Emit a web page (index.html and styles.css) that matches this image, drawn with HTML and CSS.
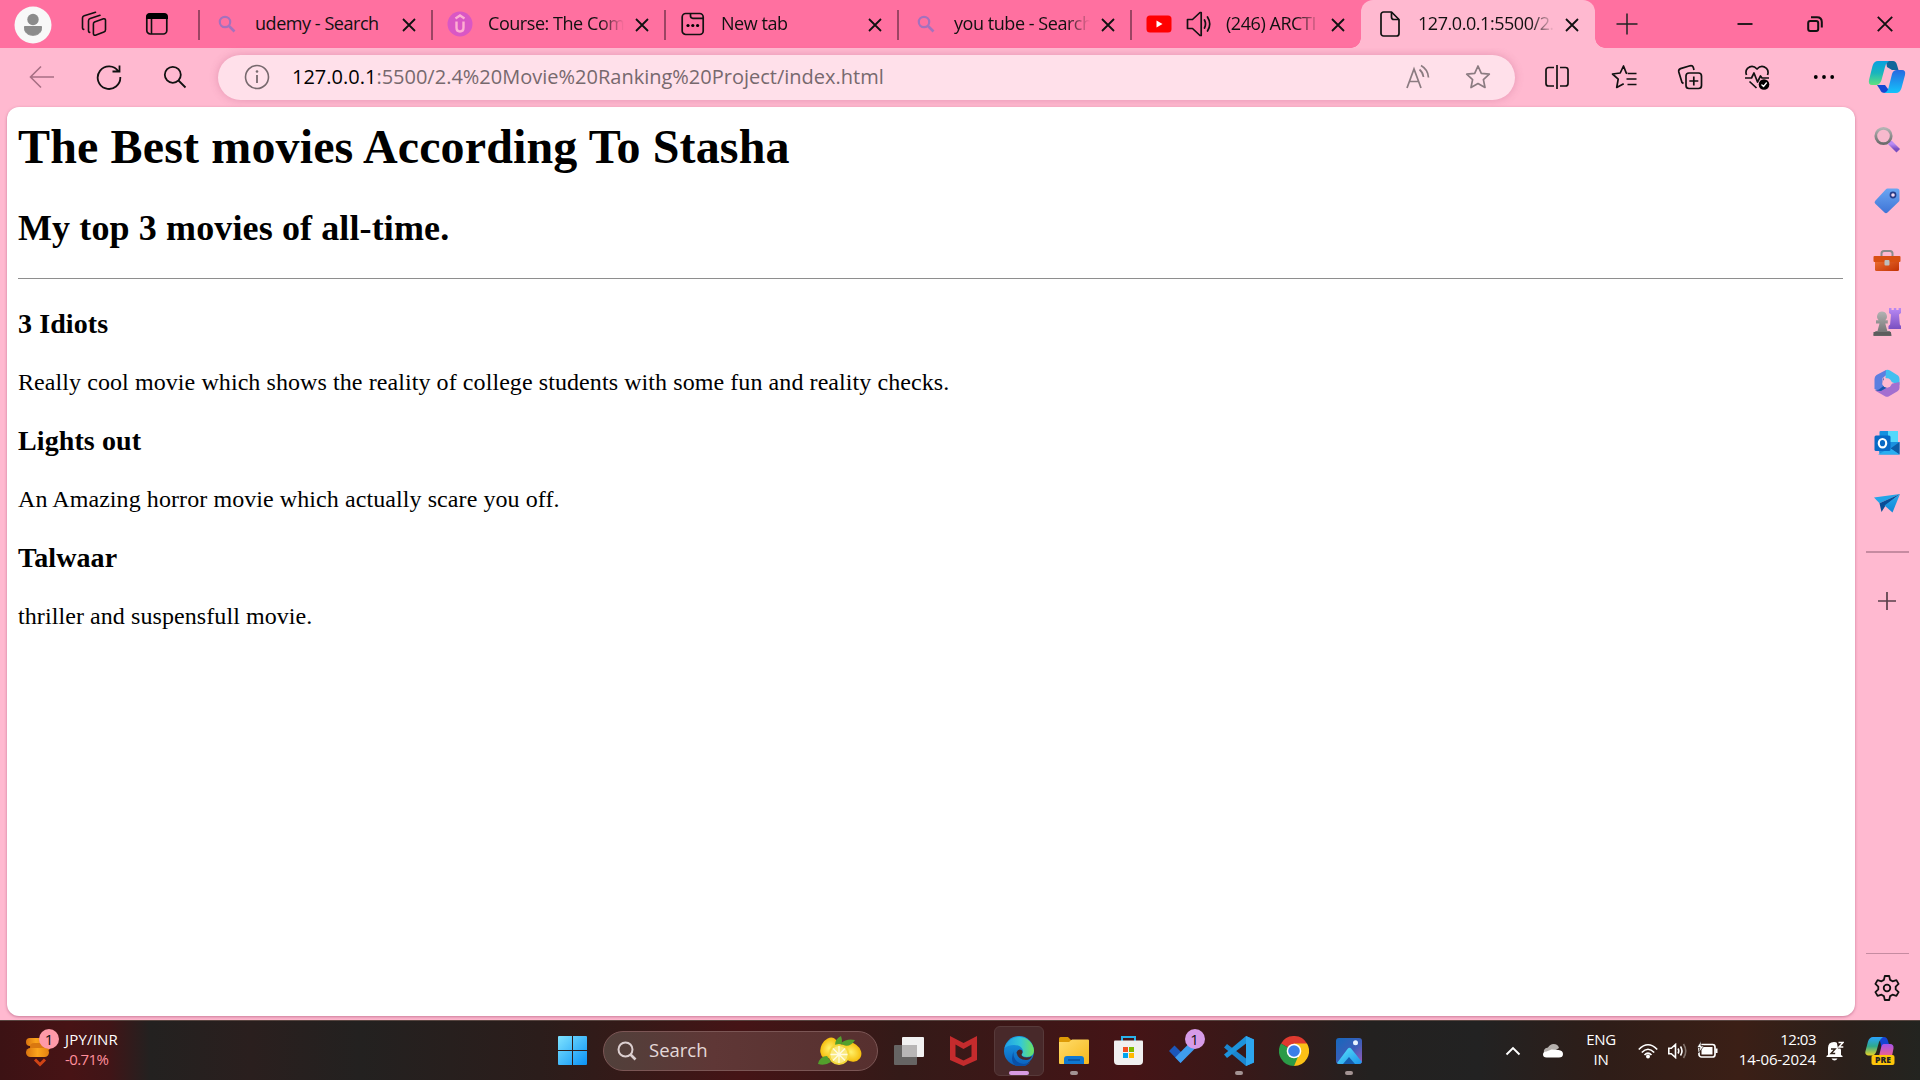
FILE: index.html
```html
<!DOCTYPE html>
<html lang="en">
<head>
<meta charset="utf-8">
<title>Movie Ranking</title>
<link rel="stylesheet" href="styles.css">
</head>
<body>
<svg width="0" height="0" class="defs">
  <defs>
    <linearGradient id="winBlue" x1="0" y1="0" x2="1" y2="1"><stop offset="0" stop-color="#7fe3ff"/><stop offset="1" stop-color="#0a92f5"/></linearGradient>
    <linearGradient id="cpTop" x1="0" y1="0" x2="0" y2="1"><stop offset="0" stop-color="#0aa0e0"/><stop offset=".5" stop-color="#19b5bd"/><stop offset="1" stop-color="#5fe27f"/></linearGradient>
    <linearGradient id="cpBot" x1="0" y1="0" x2="0" y2="1"><stop offset="0" stop-color="#2668e0"/><stop offset="1" stop-color="#14c4fb"/></linearGradient>
    <linearGradient id="tagBlue" x1="0" y1="0" x2="0" y2="1"><stop offset="0" stop-color="#6aa6f2"/><stop offset="1" stop-color="#3f74d6"/></linearGradient>
    <linearGradient id="purple" x1="0" y1="0" x2="0" y2="1"><stop offset="0" stop-color="#b98af5"/><stop offset="1" stop-color="#7a4fc0"/></linearGradient>
    <linearGradient id="grey" x1="0" y1="0" x2="0" y2="1"><stop offset="0" stop-color="#b3b3b3"/><stop offset="1" stop-color="#6b6b6b"/></linearGradient>
    <linearGradient id="box" x1="0" y1="0" x2="1" y2="1"><stop offset="0" stop-color="#ef7336"/><stop offset="1" stop-color="#c23203"/></linearGradient>
    <linearGradient id="plane" x1="0" y1="0" x2="0" y2="1"><stop offset="0" stop-color="#2aa9ea"/><stop offset="1" stop-color="#0d86d8"/></linearGradient>
    <linearGradient id="edgeA" x1="0" y1="0" x2="1" y2="0"><stop offset="0" stop-color="#1f9fe8"/><stop offset=".55" stop-color="#35c9d6"/><stop offset="1" stop-color="#6fe35c"/></linearGradient>
    <linearGradient id="edgeB" x1="0" y1="0" x2="0" y2="1"><stop offset="0" stop-color="#1a9fe6"/><stop offset="1" stop-color="#0b60bd"/></linearGradient>
    <linearGradient id="folder" x1="0" y1="0" x2="1" y2="1"><stop offset="0" stop-color="#ffdc6b"/><stop offset="1" stop-color="#f6b81c"/></linearGradient>
    <linearGradient id="photo" x1="0" y1="0" x2="1" y2="1"><stop offset="0" stop-color="#1668bd"/><stop offset=".55" stop-color="#3c5db8"/><stop offset="1" stop-color="#9b5bb8"/></linearGradient>
    <linearGradient id="hill" x1="0" y1="0" x2="1" y2="1"><stop offset="0" stop-color="#5be4fb"/><stop offset="1" stop-color="#1b93ea"/></linearGradient>
    <linearGradient id="coin" x1="0" y1="0" x2="1" y2="0"><stop offset="0" stop-color="#d9740f"/><stop offset=".5" stop-color="#fba51c"/><stop offset="1" stop-color="#e38110"/></linearGradient>
    <radialGradient id="lemon"><stop offset="0" stop-color="#fff16a"/><stop offset="1" stop-color="#f5bd0c"/></radialGradient>
    <linearGradient id="preA" x1="0" y1="0" x2="0" y2="1"><stop offset="0" stop-color="#2aa4ff"/><stop offset=".5" stop-color="#2ea98c"/><stop offset="1" stop-color="#e8d326"/></linearGradient>
    <linearGradient id="preB" x1="0" y1="0" x2="0" y2="1"><stop offset="0" stop-color="#a553ea"/><stop offset="1" stop-color="#f0608c"/></linearGradient>
    <symbol id="x" viewBox="0 0 16 16"><path d="M2 2l12 12M14 2L2 14" stroke="#111" stroke-width="1.8" fill="none"/></symbol>
    <symbol id="mag" viewBox="0 0 18 18"><circle cx="7" cy="7" r="5.2" stroke="#a571bd" stroke-width="2.2" fill="none"/><path d="M11 11l5.5 5.5" stroke="#a571bd" stroke-width="2.6"/></symbol>
  </defs>
</svg>

<header class="tabstrip">
  <svg class="avatar" width="38" height="38" viewBox="0 0 38 38"><circle cx="19" cy="19" r="18.5" fill="#f8f8f8"/><circle cx="19" cy="13.5" r="5.7" fill="#8b8b8b"/><path d="M10.500 20.500h17v1.800c0 4-3.400 7-8.500 7s-8.500-3-8.500-7z" fill="#8b8b8b" stroke="#8b8b8b" stroke-linejoin="round"/></svg>
  <svg class="spaces" width="26" height="26" viewBox="0 0 26 26" fill="none" stroke="#111" stroke-width="1.600" stroke-linejoin="round" stroke-linecap="round"><path d="M13.500 11l9-3.200a1.500 1.500 0 0 1 2 1.400v9.600a2.500 2.500 0 0 1-1.600 2.300l-8.500 3.100a1.500 1.500 0 0 1-2-1.400V13.200a2.300 2.300 0 0 1 1.100-2.200"/><path d="M19 4.300l-9.800 3.200A2.500 2.500 0 0 0 7.500 9.700v10.400q.2 1.200 1.200 1.300"/><path d="M14.500 1.300L3.200 4.700A2.500 2.500 0 0 0 1.500 6.900v10.200q.2 1.200 1.200 1.300"/></svg>
  <svg class="tabact" width="24" height="24" viewBox="0 0 24 24"><rect x="1.800" y="2" width="20" height="20" rx="3.500" fill="none" stroke="#111" stroke-width="1.700"/><path d="M1 7V5a4 4 0 0 1 4-4h14a4 4 0 0 1 4 4v2z" fill="#000"/><path d="M6.500 7v15" stroke="#111" stroke-width="1.600"/></svg>
  <div class="tab first"><span class="fav"><svg width="18" height="18"><use href="#mag"/></svg></span><span class="label">udemy - Search</span><svg class="close" width="16" height="16"><use href="#x"/></svg></div>
  <div class="tab"><span class="fav"><svg width="26" height="26" viewBox="0 0 26 26"><circle cx="13" cy="13" r="12.500" fill="#d957c5"/><path d="M8.500 7.500L13 4.500l4.500 3M9.500 10.500v6q0 4 3.500 4t3.500-4v-6" fill="none" stroke="#ffaed2" stroke-width="2.400"/></svg></span><span class="label">Course: The Com</span><svg class="close" width="16" height="16"><use href="#x"/></svg></div>
  <div class="tab"><span class="fav"><svg width="24" height="24" viewBox="0 0 24 24"><rect x="1.200" y="1.500" width="21" height="21" rx="3.500" fill="none" stroke="#111" stroke-width="1.700"/><path d="M9.500 1.500V4q0 2.300 2.300 2.300h10.500" fill="none" stroke="#111" stroke-width="1.700"/><circle cx="7" cy="13.500" r="1.600"/><circle cx="11.800" cy="13.500" r="1.600"/><circle cx="16.600" cy="13.500" r="1.600"/></svg></span><span class="label">New tab</span><svg class="close" width="16" height="16"><use href="#x"/></svg></div>
  <div class="tab"><span class="fav"><svg width="18" height="18"><use href="#mag"/></svg></span><span class="label">you tube - Search</span><svg class="close" width="16" height="16"><use href="#x"/></svg></div>
  <div class="tab media"><span class="fav"><svg width="26" height="18" viewBox="0 0 26 18"><rect x=".5" y=".5" width="25" height="17" rx="3.500" fill="#f00"/><path d="M10.500 5.500v7l6-3.500z" fill="#fff"/></svg></span><svg class="sound" width="26" height="26" viewBox="0 0 26 26" fill="none" stroke="#111" stroke-width="1.700" stroke-linejoin="round" stroke-linecap="round"><path d="M1.500 8.500h5L14 1.500h1.200v23H14L6.500 17.500h-5z"/><path d="M18.500 9q2 4 0 8M21.500 6q4.500 7 0 14"/></svg><span class="label">(246) ARCTI</span><svg class="close" width="16" height="16"><use href="#x"/></svg></div>
  <div class="tab active"><span class="fav"><svg width="20" height="26" viewBox="0 0 20 26" fill="none" stroke="#111" stroke-width="1.700" stroke-linejoin="round"><path d="M11.500 1H3.500A2.500 2.500 0 0 0 1 3.500v19A2.500 2.500 0 0 0 3.500 25h13a2.500 2.500 0 0 0 2.500-2.500V8.500z"/><path d="M11.500 1v5q0 2.500 2.500 2.500h5"/></svg></span><span class="label">127.0.0.1:5500/2.</span><svg class="close" width="16" height="16"><use href="#x"/></svg></div>
  <svg class="newtab" width="22" height="22" viewBox="0 0 22 22"><path d="M11 .5v21M.5 11h21" stroke="#222" stroke-width="1.500"/></svg>
  <div class="winctl">
    <svg width="16" height="16" viewBox="0 0 16 16"><path d="M.5 8h15" stroke="#111" stroke-width="1.800"/></svg>
    <svg width="16" height="16" viewBox="0 0 16 16" fill="none" stroke="#111" stroke-width="2"><rect x="1.200" y="5" width="10" height="10" rx="2"/><path d="M4 1.200h6q4.800 0 4.800 4.800v5.500"/></svg>
    <svg width="16" height="16" viewBox="0 0 16 16"><path d="M.8.800l14.400 14.400M15.200.8L.8 15.200" stroke="#111" stroke-width="1.900"/></svg>
  </div>
</header>

<nav class="toolbar">
  <div class="navbtns">
    <svg width="26" height="24" viewBox="0 0 26 24"><path d="M25 12H1.500M12 1.500L1.500 12 12 22.500" fill="none" stroke="#a86f84" stroke-width="1.600"/></svg>
    <svg width="26" height="26" viewBox="0 0 26 26" fill="none" stroke="#111" stroke-width="1.800"><path d="M22.500 7.500A11.300 11.300 0 1 0 24.300 13M23.500 1.500v6h-7"/></svg>
    <svg width="24" height="24" viewBox="0 0 24 24" fill="none" stroke="#111" stroke-width="1.800"><circle cx="9.800" cy="9.800" r="8"/><path d="M15.500 15.500l7 7"/></svg>
  </div>
  <div class="address">
    <svg width="26" height="26" viewBox="0 0 26 26"><circle cx="13" cy="13" r="11.500" fill="none" stroke="#77696e" stroke-width="1.600"/><path d="M13 11v8" stroke="#77696e" stroke-width="1.800"/><circle cx="13" cy="7.500" r="1.300" fill="#77696e"/></svg>
    <span class="url"><b>127.0.0.1</b>:5500/2.4%20Movie%20Ranking%20Project/index.html</span>
    <svg width="26" height="26" viewBox="0 0 26 26" fill="none" stroke="#8b7b81" stroke-width="1.700"><path d="M2 24L9 5l7 19M4.500 17.500h9M14.500 5.500q3.500 3 4 7.500M16 1.500q7 4 7.500 12"/></svg>
    <svg width="26" height="26" viewBox="0 0 26 26"><path d="M13 2l3.300 7.300 8 .9-5.900 5.400 1.600 7.900-7-4-7 4 1.600-7.900L1.700 10.200l8-.9z" fill="none" stroke="#8b7b81" stroke-width="1.700" stroke-linejoin="round"/></svg>
  </div>
  <div class="tools">
    <svg width="26" height="26" viewBox="0 0 26 26" fill="none" stroke="#111" stroke-width="1.700"><path d="M10 3.500H4.500A2.500 2.500 0 0 0 2 6v13.500A2.500 2.500 0 0 0 4.500 22H10M16 3.500h5.500A2.500 2.500 0 0 1 24 6v13.500a2.500 2.500 0 0 1-2.500 2.500H16M13 1v24"/></svg>
    <svg width="26" height="26" viewBox="0 0 26 26" fill="none" stroke="#111" stroke-width="1.700" stroke-linejoin="round"><path d="M16.500 9.300l-1.200-.2L12.500 2l-3.300 7-7.700 1 5.700 5.200-1.500 8.300 7-3.800M17 9.500h8.500M15.500 15h10M16.500 20.500h9"/></svg>
    <svg width="26" height="26" viewBox="0 0 26 26" fill="none" stroke="#111" stroke-width="1.700"><rect x="9" y="9" width="15.500" height="15.500" rx="3"/><path d="M16.800 12.500v9M12.300 17h9M6.500 19.500L5 18.500 1.800 8q-.6-2.500 1.700-3.400l9.500-2.800q2.500-.6 3.300 1.600l.7 2.600"/></svg>
    <svg width="26" height="26" viewBox="0 0 26 26" fill="none" stroke="#111" stroke-width="1.700" stroke-linejoin="round"><path d="M2.500 11Q1 7 3.500 4.300 8.500 0 13 5q4.500-5 9.500-.7Q25 7 23.500 11M1 14h6.500l2.500-5 3.500 9 3-6 1.500 2H25M5.500 17.500l7 6.500"/><circle cx="20" cy="20.500" r="5.300" fill="#000" stroke="none"/><path d="M17.500 20.500l2 2 3.200-4" stroke="#fff" stroke-width="1.300"/></svg>
    <svg width="26" height="26" viewBox="0 0 26 26"><circle cx="4.800" cy="13" r="1.900"/><circle cx="13" cy="13" r="1.900"/><circle cx="21.200" cy="13" r="1.900"/></svg>
  </div>
  <svg class="copilot" width="38" height="34" viewBox="0 0 38 34"><path d="M18 1h7q3 0 4 4l1.500 5H24l-5-3z" fill="#11659a"/><path d="M10 1h11q-3 2-4 6l-3.500 13q-1.500 5-5.500 5H4q-4 0-3-5L4.500 6Q6 1 10 1z" fill="url(#cpTop)"/><path d="M9 25h8l6 8h-6q-4 0-5-3.500z" fill="#1746d2"/><path d="M28 33H16q3.500-1 4.500-5L24 14q1.200-4 5-4h5q4 0 3 5l-3.500 13q-1.500 5-5.500 5z" fill="url(#cpBot)"/></svg>
</nav>

<div class="middle">
  <main class="page">
    <h1>The Best movies According To Stasha</h1>
    <h2>My top 3 movies of all-time.</h2>
    <hr>
    <h3>3 Idiots</h3>
    <p>Really cool movie which shows the reality of college students with some fun and reality checks.</p>
    <h3>Lights out</h3>
    <p>An Amazing horror movie which actually scare you off.</p>
    <h3>Talwaar</h3>
    <p>thriller and suspensfull movie.</p>
  </main>
  <aside class="sidebar">
    <svg width="28" height="28" viewBox="0 0 28 28"><circle cx="10.500" cy="10" r="7.700" fill="#f7b9cd" stroke="url(#grey)" stroke-width="2.800"/><path d="M16 15.500l3.500 3.500" stroke="#6b6b6b" stroke-width="2.600"/><path d="M18.500 18l5 5" stroke="url(#purple)" stroke-width="5" stroke-linecap="square"/></svg>
    <svg width="28" height="28" viewBox="0 0 28 28"><path d="M14.500 1.500h9.500q2.500 0 2.500 2.500v9q0 1-.8 1.800L14.500 25.500q-1.500 1.500-3 0L2.300 16.800q-1.500-1.500 0-3L12.700 2.500q.8-1 1.800-1z" fill="url(#tagBlue)"/><circle cx="20" cy="8" r="2.600" fill="#f4d8f0" stroke="#263c88" stroke-width="1.600"/></svg>
    <svg width="28" height="28" viewBox="0 0 28 28"><path d="M8.500 9V6.500Q8.500 4 11 4h6q2.500 0 2.500 2.500V9" fill="none" stroke="#8b8b8b" stroke-width="2"/><rect x="2" y="12" width="24" height="12" rx="1.500" fill="url(#box)"/><rect x=".5" y="9" width="27" height="6" rx="1" fill="#d94f12"/><rect x="11.500" y="13" width="5" height="5.500" rx="1" fill="#bdbdbd"/></svg>
    <svg width="28" height="28" viewBox="0 0 28 28"><path d="M16 0h2.500v2h2.300V0h2.500v2h2.300V0H28v5l-2 1.500.8 10L28 18v3H15.500v-3l1.600-1.500.9-10L16 5z" fill="url(#purple)"/><path d="M9 3.500a5 5 0 0 1 3.300 8.700h2.500v3.300h-2.500l2 7.500h2.200q2 1 2 5H.5q0-4 2.500-5h1.500l2-7.500H3v-3.300h2.700A5 5 0 0 1 9 3.500z" fill="url(#grey)"/><path d="M.5 24h17.500v3.500H.5z" fill="#5d5d5d"/></svg>
    <svg width="28" height="28" viewBox="0 0 28 28"><path d="M13 1L3.500 6Q1.500 7.500 1.500 10v10l6 3 6-4-4-3.500V9L16 4z" fill="#5c7fe0"/><path d="M13 1q2-.8 4 .5l8 5q1.500 1 1.500 3.500v6l-8-3-6-4z" fill="#42bff0"/><path d="M11 2.500v9l-2 3.500 2-7z" fill="#164d9c"/><path d="M26.500 13v6q0 2-2 3.300l-8.500 5q-2 1-4 0L2 21.500h6l11.500-7z" fill="#a36fd0"/><path d="M2 21.500l6 .5 6-3.500-3-2-5 4z" fill="#1b55ad"/><circle cx="14" cy="14" r="4.700" fill="#ffb9d0"/></svg>
    <svg width="28" height="28" viewBox="0 0 28 28"><rect x="6.500" y="2" width="18.500" height="20" rx="1" fill="#1490df"/><path d="M15 2h10v12H15z" fill="#54d8fb"/><path d="M5 13h21.500v12.500h-20z" fill="#1b91df"/><path d="M26.500 13l-9 6.500 9 6z" fill="#0d5ca6"/><path d="M17 19l9.500 6.500H5z" fill="#2aaef0"/><rect x="1.500" y="6.500" width="16" height="15.500" rx="1.500" fill="#0869c5"/><ellipse cx="9.500" cy="14.200" rx="3.700" ry="4.200" fill="none" stroke="#fff" stroke-width="2.200"/></svg>
    <svg width="28" height="28" viewBox="0 0 28 28"><path d="M27 4L1 7.500l5.500 5.800z" fill="#22a5e8"/><path d="M27 4L6.500 13.300 8.500 22l3.800-6z" fill="#0a4d96"/><path d="M27 4l-15.500 11.500 8 7z" fill="url(#plane)"/></svg>
    <i class="rule thick"></i>
    <svg class="add" width="18" height="18" viewBox="0 0 18 18"><path d="M9 0v18M0 9h18" stroke="#5a3f49" stroke-width="1.700"/></svg>
    <i class="rule low"></i>
    <svg class="gear" width="28" height="28" viewBox="0 0 28 28" fill="none" stroke="#111" stroke-width="1.800" stroke-linejoin="round"><path d="M11.800 2h4.400l.9 3.900 2.400 1.400 3.900-1.200 2.200 3.800-2.900 2.700v2.800l2.900 2.700-2.200 3.800-3.900-1.200-2.400 1.400-.9 3.900h-4.400l-.9-3.900-2.400-1.400-3.900 1.200-2.200-3.800 2.900-2.700v-2.800L2.400 9.900l2.200-3.800 3.900 1.200 2.400-1.400z"/><circle cx="14" cy="14" r="3.300"/></svg>
  </aside>
</div>

<footer class="taskbar">
  <div class="widget">
    <div class="coins">
      <svg width="26" height="30" viewBox="0 0 26 30"><rect x="1" y="1" width="20" height="8" rx="4" fill="url(#coin)"/><rect x="5" y="6" width="20" height="8" rx="4" fill="#d97810"/><rect x="1" y="11" width="23" height="9" rx="4.500" fill="url(#coin)"/><path d="M10 22.500l5 5 5-5" fill="none" stroke="#cf4415" stroke-width="3"/></svg>
      <span class="badge rose">1</span>
    </div>
    <div class="quote"><span class="pair">JPY/INR</span><span class="drop">-0.71%</span></div>
  </div>
  <svg class="start" width="29" height="29" viewBox="0 0 29 29"><path d="M0 1q0-1 1-1h13v14H0zM15 0h13q1 0 1 1v13H15zM0 15h14v14H1q-1 0-1-1zM15 15h14v13q0 1-1 1H15z" fill="url(#winBlue)"/></svg>
  <div class="search">
    <svg width="20" height="20" viewBox="0 0 20 20" fill="none" stroke="#dccfd0" stroke-width="2"><circle cx="8.500" cy="8.500" r="7"/><path d="M13.500 13.500l5 5" stroke-width="2.600"/></svg>
    <span class="hint">Search</span>
    <svg class="lemons" width="46" height="30" viewBox="0 0 46 30"><ellipse cx="12" cy="12" rx="8" ry="11" transform="rotate(28 12 12)" fill="url(#lemon)"/><ellipse cx="34" cy="16" rx="11" ry="9" transform="rotate(35 34 16)" fill="url(#lemon)"/><path d="M18 9q0-6 6-9 2 6 0 9zM24 7q6-5 14-3-5 8-12 5zM1 28q2-8 9-8l4 6q-6 4-13 2z" fill="#539f2c"/><circle cx="22" cy="18.500" r="10.500" fill="#f4d63a"/><circle cx="22" cy="18.500" r="8.600" fill="#fae87e"/><path d="M22 10v17M13.500 18.500h17M16 12.500l12 12M28 12.500l-12 12" stroke="#fffbe0" stroke-width="1.300"/></svg>
  </div>
  <div class="apps">
    <span class="app"><svg width="30" height="28" viewBox="0 0 30 28"><rect x="8" y="0" width="22" height="20" rx="1" fill="#f2f2f2"/><rect x="0" y="8" width="23" height="20" rx="1" fill="#666463"/><path d="M8 8h15v12H8z" fill="#b8b6b6"/></svg></span>
    <span class="app"><svg width="27" height="30" viewBox="0 0 27 30"><path d="M0 0l13.500 7L27 0v24l-13.500 6L0 24zM5.500 8.500v12l8 4 8-4v-12l-8 4.500z" fill="#c42b2d" fill-rule="evenodd"/></svg></span>
    <span class="app on"><svg width="30" height="30" viewBox="0 0 30 30"><circle cx="15" cy="15" r="15" fill="url(#edgeB)"/><path d="M.6 12A15 15 0 0 1 30 14.500q0 6.500-7 6.500-5 0-5.500-2.500 2.500-2.500.8-5.500Q16 9 10 9 4 9 .6 12z" fill="url(#edgeA)"/><path d="M10.500 13.500Q7.500 20 13 25.500q5.500 4.500 13.500.5-4.500 5.500-12 5Q4 27 10.500 13.500z" fill="#0b4fa5"/><path d="M12.500 16.500q1.500-4 5-2.500 2 2 0 4.500 0 2.500 5 3 3 0 5.500-1.200-1.500 3.500-6 3.700-8 0-9.500-7.500z" fill="#48292a"/></svg></span>
    <span class="app run"><svg width="30" height="27" viewBox="0 0 30 27"><path d="M0 1.500Q0 0 1.500 0H9l3 3h17v6H0z" fill="#dd9a06"/><path d="M0 5h10l3-2.500h16q1 0 1 1V26q0 1-1 1H1q-1 0-1-1z" fill="url(#folder)"/><path d="M5 27v-5q0-3 3-3h14q3 0 3 3v5z" fill="#0f78d1"/><path d="M9 23h12" stroke="#0a4f98" stroke-width="1.500"/></svg></span>
    <span class="app"><svg width="29" height="29" viewBox="0 0 29 29"><path d="M8 6V1h13v5" fill="none" stroke="#29b2ea" stroke-width="2"/><path d="M0 5.500q0-1 1-1h27q1 0 1 1V25q0 4-4 4H4q-4 0-4-4z" fill="#f0f0f0"/><path d="M9 11h5v5H9z" fill="#f25022"/><path d="M15 11h5v5h-5z" fill="#7fba00"/><path d="M9 17h5v5H9z" fill="#00a4ef"/><path d="M15 17h5v5h-5z" fill="#ffb900"/></svg></span>
    <span class="app"><svg width="30" height="30" viewBox="0 0 30 30"><path d="M0 15l5.500-5.500L17 21l-5.500 6z" fill="#1c57bb"/><path d="M6.200 21.500L22 5.500l5.500 5.500-16 16z" fill="#3f9dee"/></svg><span class="badge lilac">1</span></span>
    <span class="app run"><svg width="30" height="30" viewBox="0 0 30 30"><path d="M22 0l8 3.500v23L22 30 0 11.500 3 8l19 14.500z" fill="#1b86cf"/><path d="M22 0v7.500L3 22 0 18.500z" fill="#1d93dc"/><path d="M22 0l8 3.500v23L22 30z" fill="#2da6ef"/></svg></span>
    <span class="app"><svg width="30" height="30" viewBox="0 0 30 30"><path d="M15 15L2 7.500A15 15 0 0 1 28 7.500z" fill="#df3a2f"/><path d="M15 15l-13-7.500A15 15 0 0 0 15 30l6.500-11z" fill="#2b9b47"/><path d="M15 15h6.500L15 30A15 15 0 0 0 28 7.500H15z" fill="#fbc116"/><circle cx="15" cy="15" r="7.300" fill="#fff"/><circle cx="15" cy="15" r="5.800" fill="#3a7ee8"/></svg></span>
    <span class="app run"><svg width="26" height="26" viewBox="0 0 26 26"><rect width="26" height="26" rx="3" fill="url(#photo)"/><path d="M1 25L11.500 11q2-2.500 4 0L26 24q-1 2-3 2H3q-1.500 0-2-1z" fill="url(#hill)"/><path d="M13 19l-6 7h12z" fill="#155cae"/><circle cx="19.500" cy="4.800" r="2.500" fill="#e9f3ff"/></svg></span>
  </div>
  <div class="tray">
    <svg class="chev" width="16" height="10" viewBox="0 0 16 10"><path d="M1.500 8.500L8 2l6.500 6.500" fill="none" stroke="#fff" stroke-width="1.900"/></svg>
    <svg class="cloud" width="20" height="14" viewBox="0 0 20 14"><path d="M4 10Q0 9 1 6q1-2.500 4-2.500Q7 0 10.500 0 15 0 16 4l-8 5z" fill="#b5b0ad"/><path d="M3.500 13.500Q0 13.500 0 10.500t3.500-3l5-2 7 .5q4.500.5 4.500 4 0 3.500-4 3.500z" fill="#fff"/></svg>
    <div class="lang"><span>ENG</span><span>IN</span></div>
    <svg class="wifi" width="20" height="16" viewBox="0 0 20 16" fill="none" stroke="#fff" stroke-width="1.700"><path d="M.8 6.500Q10-3 19.200 6.500M3.800 9.500q6.200-6.500 12.400 0M6.500 12q3.500-3.500 7 0"/><circle cx="10" cy="13.500" r="2" fill="#fff" stroke="none"/></svg>
    <svg class="vol" width="20" height="16" viewBox="0 0 20 16" fill="none" stroke="#fff" stroke-width="1.600"><path d="M.8 5.300h2.500L7.500 1.500v13L3.300 10.700H.8zM10 5.500q1.500 2.500 0 5M12.500 3.500q3 4.500 0 9"/><path d="M15.500 1q4.500 7 0 14" stroke="#82736c"/></svg>
    <svg class="batt" width="21" height="17" viewBox="0 0 21 17"><rect x="2" y="3.500" width="16" height="12.500" rx="2.500" fill="none" stroke="#fff" stroke-width="1.700"/><rect x="4.500" y="6" width="11" height="7.500" fill="#fff"/><path d="M18.500 7.500h2v4.500h-2z" fill="#fff"/><path d="M4 0L0 6.500h3L1.500 12 7 5H4z" fill="#fff" stroke="#2e1e18" stroke-width=".7"/></svg>
    <div class="clock"><span class="time">12:03</span><span class="date">14-06-2024</span></div>
    <svg class="bell" width="18" height="20" viewBox="0 0 18 20"><path d="M2 14V7q0-6 6-6 4 0 5.500 3.500L15 9v5l1.500 1v1H.5v-1z" fill="#fff"/><path d="M5.500 17.500h6q-1 2-3 2t-3-2z" fill="#fff"/><path d="M5 8h4.200L5 12.500h4.200" fill="none" stroke="#2e2018" stroke-width="1.400"/><path d="M10.500 0H18v7.500h-6z" fill="#2e1d17"/><path d="M12.500 1.500H17l-4 4.500h4.300" fill="none" stroke="#fff" stroke-width="1.500"/></svg>
    <svg class="pre" width="30" height="30" viewBox="0 0 30 30"><path d="M14 1h5q3 0 4 4l1.500 5-8 1z" fill="#1544d2"/><path d="M8 1h10q-3 2-4 5l-2.500 9q-1.500 4.500-5 4.500H3.500Q-.5 19 .5 15L3 5.500Q4.500 1 8 1z" fill="url(#preA)"/><path d="M19 8h6q4 0 3.500 4.500L27 20H14l2-8q.8-4 3-4z" fill="url(#preB)"/><rect x="6.500" y="19" width="23" height="10" rx="2" fill="#fdc50a"/><text x="18" y="27.300" text-anchor="middle" class="pretext">PRE</text></svg>
  </div>
</footer>
</body>
</html>
```
FILE: styles.css
```css
* { box-sizing: border-box; }
body {
  margin: 0;
  width: 1920px;
  height: 1080px;
  overflow: hidden;
  display: flex;
  flex-direction: column;
  background: #ffb9d0;
  font-family: "Open Sans", "Noto Sans", sans-serif;
  color: #111;
}
svg { display: block; flex: none; }
.defs { position: absolute; }

.tabstrip { height: 48px; flex: none; display: flex; align-items: center; background: #ff70a0; }
.avatar { margin: 1px 0 0 14px; }
.spaces { margin-left: 29px; }
.tabact { margin-left: 38px; }
.tab { width: 233px; height: 48px; display: flex; align-items: center; position: relative; }
.tab.first { margin-left: 29px; }
.tab:not(.active)::before { content: ""; position: absolute; left: 0; top: 10px; width: 1.500px; height: 30px; background: #9c4463; }
.fav { width: 26px; margin-left: 16px; display: flex; justify-content: center; }
.label { width: 136px; margin-left: 15px; overflow: hidden; white-space: nowrap; font-size: 18px; letter-spacing: -.45px; line-height: 26px; margin-top: -2px; -webkit-mask-image: linear-gradient(90deg, #000 112px, transparent 136px); mask-image: linear-gradient(90deg, #000 112px, transparent 136px); }
.first .label { -webkit-mask-image: none; mask-image: none; }
.close { margin: 2px 0 0 10px; }
.sound { margin-left: 14px; }
.media { width: 231px; }
.media .label { width: 94px; margin-left: 14px; -webkit-mask-image: linear-gradient(90deg, #000 70px, transparent 94px); mask-image: linear-gradient(90deg, #000 70px, transparent 94px); }
.tab.active { width: 234px; background: #ffb9d0; border-radius: 12px 12px 0 0; }
.active::before, .active::after { content: ""; position: absolute; bottom: 0; width: 10px; height: 10px; }
.active::before { left: -10px; background: radial-gradient(circle at 0 0, transparent 9.500px, #ffb9d0 10px); }
.active::after { right: -10px; background: radial-gradient(circle at 100% 0, transparent 9.500px, #ffb9d0 10px); }
.newtab { margin-left: 21px; }
.winctl { margin-left: auto; padding-right: 27px; display: flex; gap: 54px; }

.toolbar { height: 59px; flex: none; display: flex; align-items: center; padding-bottom: 1px; }
.navbtns { display: flex; align-items: center; gap: 41px; padding-left: 29px; width: 218px; }
.address { width: 1297px; height: 45px; border-radius: 23px; background: #ffe0ea; box-shadow: 0 0 8px rgba(170, 70, 110, .3); display: flex; align-items: center; padding: 0 24px 0 26px; gap: 34px; }
.url { flex: 1; margin-left: -12px; font-size: 20px; color: #77696e; white-space: nowrap; margin-top: -1px; }
.url b { font-weight: 400; color: #000; }
.tools { display: flex; gap: 40.700px; margin-left: 29px; }
.copilot { margin-left: 31px; }

.middle { height: 913px; flex: none; display: flex; }
.page { width: 1848px; height: 909px; margin-left: 7px; padding: 0 12px 0 11px; background: #fff; border-radius: 12px; box-shadow: 0 1px 3px rgba(150, 60, 95, .5); font-family: "Liberation Serif", serif; font-size: 24px; color: #000; overflow: hidden; }
.page h1 { font-size: 48px; letter-spacing: .14px; line-height: 55px; margin: 12px 0 0; }
.page h2 { font-size: 36px; letter-spacing: .12px; line-height: 41px; margin: 34px 0 0; }
.page hr { margin: 29px 0 0; border: 0; border-top: 1.500px solid #8e8e8e; }
.page h3 { font-size: 28px; letter-spacing: .1px; line-height: 32px; margin: 29px 0 0; }
.page p { line-height: 27px; letter-spacing: .08px; margin: 29px 0 0; }

.sidebar { width: 65px; display: flex; flex-direction: column; align-items: center; padding: 19px 1px 18px 0; gap: 32.700px; }
.rule { width: 43px; height: 1px; background: #c68ba1; flex: none; }
.thick { height: 2px; }
.add { margin-top: 6px; }
.low { margin-top: auto; }
.gear { margin-top: -13px; }

.taskbar { height: 60px; flex: none; display: flex; align-items: center; border-top: 1px solid #57443f; color: #fff; background: linear-gradient(90deg, #3c1214 0, #471315 70px, #401517 110px, #232120 150px, #2a1f1e 250px, #232120 360px, #2b1d1b 540px, #341a18 620px, #451416 740px, #341a18 900px, #451416 1130px, #3a1818 1230px, #232120 1370px, #222 1480px, #2e1d18 1600px, #3b1f16 1740px, #2a201b 1850px, #232420 1920px); }
.widget { width: 558px; padding-left: 25px; display: flex; gap: 14px; }
.coins { position: relative; padding-top: 5px; }
.badge { position: absolute; width: 20px; height: 20px; border-radius: 10px; font-size: 15px; line-height: 20px; text-align: center; color: #111; }
.rose { left: 14px; top: -3px; background: #ff9aa8; }
.lilac { left: 26px; top: 3px; background: #d69be8; }
.quote, .lang, .clock { display: flex; flex-direction: column; font-size: 15px; line-height: 20px; white-space: nowrap; margin-top: -3px; }
.pair { letter-spacing: .18px; }
.drop { color: #ff8f9c; letter-spacing: -.6px; }
.search { width: 275px; height: 40px; margin-left: 16px; border: 1px solid #7b5655; border-radius: 20px; background: linear-gradient(90deg, #51403b, #5f3736 40%, #57302f); display: flex; align-items: center; padding: 0 13px; }
.hint { flex: 1; margin: -2px 0 0 12px; font-size: 18.500px; color: #e4d8d8; }
.lemons { margin-right: 1px; }
.apps { display: flex; gap: 5px; margin-left: 5.500px; }
.app { position: relative; width: 50px; height: 50px; display: flex; align-items: center; justify-content: center; }
.on { background: #48292a; border: 1px solid #573a3a; border-radius: 6px; }
.on::after, .run::after { content: ""; position: absolute; left: 21px; bottom: 1px; width: 8px; height: 4px; border-radius: 2px; background: #a39393; }
.on::after { left: 14px; bottom: 0; width: 20px; background: #d99be3; }
.tray { margin-left: auto; display: flex; align-items: center; padding-right: 25px; }
.cloud { margin-left: 22px; }
.lang { width: 32px; margin-left: 22px; align-items: center; letter-spacing: -.3px; }
.wifi { margin-left: 21px; }
.vol { margin-left: 10px; }
.batt { margin-left: 9px; margin-top: -2px; }
.clock { width: 98px; align-items: flex-end; }
.time { letter-spacing: -.5px; }
.date { letter-spacing: -.1px; }
.bell { margin-left: 10px; }
.pre { margin-left: 21px; }
.pretext { font: 800 8.500px "Open Sans", sans-serif; fill: #222; }
```
